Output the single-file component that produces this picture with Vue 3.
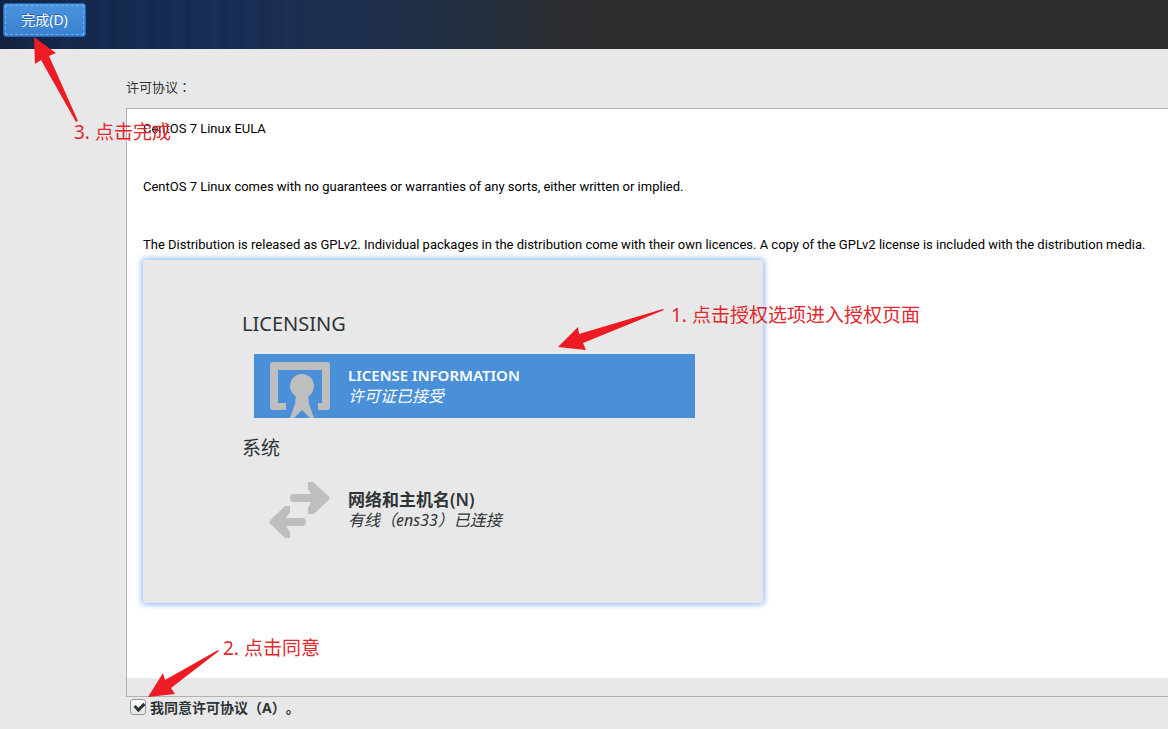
<script setup>
import { ref } from 'vue'

const accepted = ref(true)
const paragraphs = [
  'CentOS 7 Linux EULA',
  'CentOS 7 Linux comes with no guarantees or warranties of any sorts, either written or implied.',
  'The Distribution is released as GPLv2. Individual packages in the distribution come with their own licences. A copy of the GPLv2 license is included with the distribution media.'
]
</script>

<template>
  <div class="page">
    <header class="topbar">
      <button type="button" class="done">完成(D)</button>
    </header>

    <main class="content">
      <h1 class="label">许可协议：</h1>

      <section class="frame">
        <div class="document">
          <p v-for="text in paragraphs" :key="text" class="para">{{ text }}</p>

          <div class="hub">
            <h2 class="group latin">LICENSING</h2>
            <button type="button" class="spoke selected">
              <svg class="icon" width="64" height="64" viewBox="0 0 64 64" aria-hidden="true">
                <path
                  fill="#bebebe"
                  d="M5 8H59Q62 8 62 11V53Q62 56 59 56H50V49H54V16H10V49H18V56H5Q2 56 2 53V11Q2 8 5 8Z"
                />
                <circle cx="34" cy="32" r="12" fill="#bebebe" />
                <path fill="#bebebe" d="M28 40H40L41 50L46 64H42L34 56L26 64H22L27 50Z" />
              </svg>
              <span class="text">
                <strong class="name">LICENSE INFORMATION</strong>
                <em class="status">许可证已接受</em>
              </span>
            </button>

            <h2 class="group">系统</h2>
            <button type="button" class="spoke">
              <svg class="icon" width="64" height="64" viewBox="0 0 64 64" aria-hidden="true">
                <path
                  fill="#bebebe"
                  d="M26 16H43L40 11V4H45L61 18.500Q62 20 61 21.500L46 36H40V30L43 24H26Q22 24 22 20T26 16Z"
                />
                <path
                  fill="#bebebe"
                  d="M34 40H18L22 34V28H17L2 42.500Q1 44 2 45.500L17 60H22V54L18 48H34Q38 48 38 44T34 40Z"
                />
              </svg>
              <span class="text">
                <strong class="name chinese">网络和主机名(N)</strong>
                <em class="status">有线（ens33）已连接</em>
              </span>
            </button>
          </div>
        </div>
        <div class="scroll-track"></div>
      </section>

      <label class="agree">
        <input v-model="accepted" type="checkbox" class="check" />
        <span>我同意许可协议（A）。</span>
      </label>
    </main>

    <svg class="arrow arrow-one" width="108" height="42" viewBox="0 0 108 42" aria-hidden="true">
      <path fill="#ed1c24" d="M0 39L20 19L21 26L105 1L106 2L25 35L28 42Z" />
    </svg>
    <span class="note note-one">1. 点击授权选项进入授权页面</span>

    <svg class="arrow arrow-two" width="72" height="48" viewBox="0 0 72 48" aria-hidden="true">
      <path fill="#ed1c24" d="M0 47L15 23L17 30L70 0L71 1L23 38L27 44Z" />
    </svg>
    <span class="note note-two">2. 点击同意</span>

    <svg class="arrow arrow-three" width="46" height="86" viewBox="0 0 46 86" aria-hidden="true">
      <path fill="#ed1c24" d="M0 0L22 16L15 19L44 84L42 85L7 23L1 27Z" />
    </svg>
    <span class="note note-three">3. 点击完成</span>
  </div>
</template>

<style>
body {
  margin: 0;
  background: #e8e8e8;
}
</style>

<style scoped>
.page {
  position: relative;
  box-sizing: border-box;
  display: flex;
  flex-direction: column;
  min-height: 100vh;
  overflow: hidden;
  background: #e8e8e8;
  color: #2e3436;
  font-family: "Noto Sans", "Noto Sans CJK SC", sans-serif;
  font-size: 13px;
}

.topbar {
  box-sizing: border-box;
  height: 49px;
  padding: 3px;
  background:
    linear-gradient(90deg, transparent 200px, #1f2e4a 390px, #24303f 480px, #2b2d31 560px, #2d2d2d 620px),
    repeating-linear-gradient(90deg, rgba(10, 20, 50, 0.1) 0 5px, transparent 9px 23px, rgba(30, 70, 130, 0.1) 27px 31px, transparent 37px),
    linear-gradient(90deg, #14233f 0, #15294f 90px, #172f58 300px);
}

.done {
  box-sizing: border-box;
  width: 83px;
  height: 34px;
  padding: 0 0 2px;
  border: 1px solid #2268b4;
  border-radius: 3px;
  outline: 1px dashed #78aee6;
  outline-offset: -3px;
  background: linear-gradient(#4a94df, #3a80cf);
  color: #fff;
  font: inherit;
  font-size: 14px;
  text-shadow: 0 -1px #2861a0;
}

.content {
  flex: 1;
  display: flex;
  flex-direction: column;
  padding: 28px 0 0 126px;
}

.label {
  margin: 0 0 11px;
  font-family: "Noto Sans CJK TC", sans-serif;
  font-size: 13px;
  font-weight: 400;
  line-height: 20px;
}

.frame {
  flex: 1;
  display: flex;
  flex-direction: column;
  border: 1px solid #b2b2b2;
  border-right: 0;
}

.document {
  flex: 1;
  padding: 11px 0 0 16px;
  background: #fff;
}

.para {
  margin: 0 0 40px;
  color: #000;
  font-family: Roboto, sans-serif;
  font-size: 13px;
  line-height: 18px;
  white-space: nowrap;
}

.para:last-of-type {
  margin-bottom: 6px;
}

.hub {
  box-sizing: border-box;
  width: 60.5%;
  min-width: 480px;
  padding: 50px 68px 45px 99px;
  border-radius: 2px;
  background: #e8e8e8;
  box-shadow: 0 0 6px 1px #7db0f5;
}

.group {
  margin: 0;
  font-size: 19px;
  font-weight: 400;
  line-height: 28px;
}

.latin {
  font-size: 20px;
}

.spoke {
  box-sizing: border-box;
  display: flex;
  align-items: center;
  gap: 16px;
  width: calc(100% - 12px);
  height: 64px;
  margin: 16px 0 16px 12px;
  padding: 0 14px;
  border: 0;
  background: transparent;
  color: #2e3436;
  font: inherit;
  text-align: left;
}

.selected {
  background: #4a90d9;
  color: #fff;
}

.icon {
  flex: none;
}

.text {
  display: flex;
  flex-direction: column;
  font-size: 16px;
  line-height: 21px;
}

.name {
  font-size: 15px;
  font-weight: 600;
}

.chinese {
  font-size: 17px;
}

.scroll-track {
  height: 18px;
  background: #e8e8e8;
}

.agree {
  display: flex;
  align-items: center;
  gap: 4px;
  height: 20px;
  padding: 0 0 12px 4px;
  font-size: 14px;
  font-weight: 700;
  text-spacing-trim: space-all;
}

.check {
  appearance: none;
  position: relative;
  box-sizing: border-box;
  width: 16px;
  height: 16px;
  margin: 0;
  border: 1px solid #989898;
  border-radius: 3px;
  background: linear-gradient(#fff, #e4e4e4);
}

.check:checked::after {
  content: "";
  position: absolute;
  left: 5px;
  top: 1px;
  width: 4px;
  height: 7px;
  border: solid #2e3436;
  border-width: 0 3px 3px 0;
  transform: rotate(45deg);
}

.arrow,
.note {
  position: absolute;
}

.note {
  color: #e0282e;
  font-size: 19px;
  line-height: 26px;
  white-space: nowrap;
}

.arrow-one { left: 558px; top: 308px; }
.note-one { left: 671px; top: 302px; }
.arrow-two { left: 148px; top: 650px; }
.note-two { left: 223px; top: 635px; }
.arrow-three { left: 34px; top: 37px; }
.note-three { left: 74px; top: 119px; }
</style>
